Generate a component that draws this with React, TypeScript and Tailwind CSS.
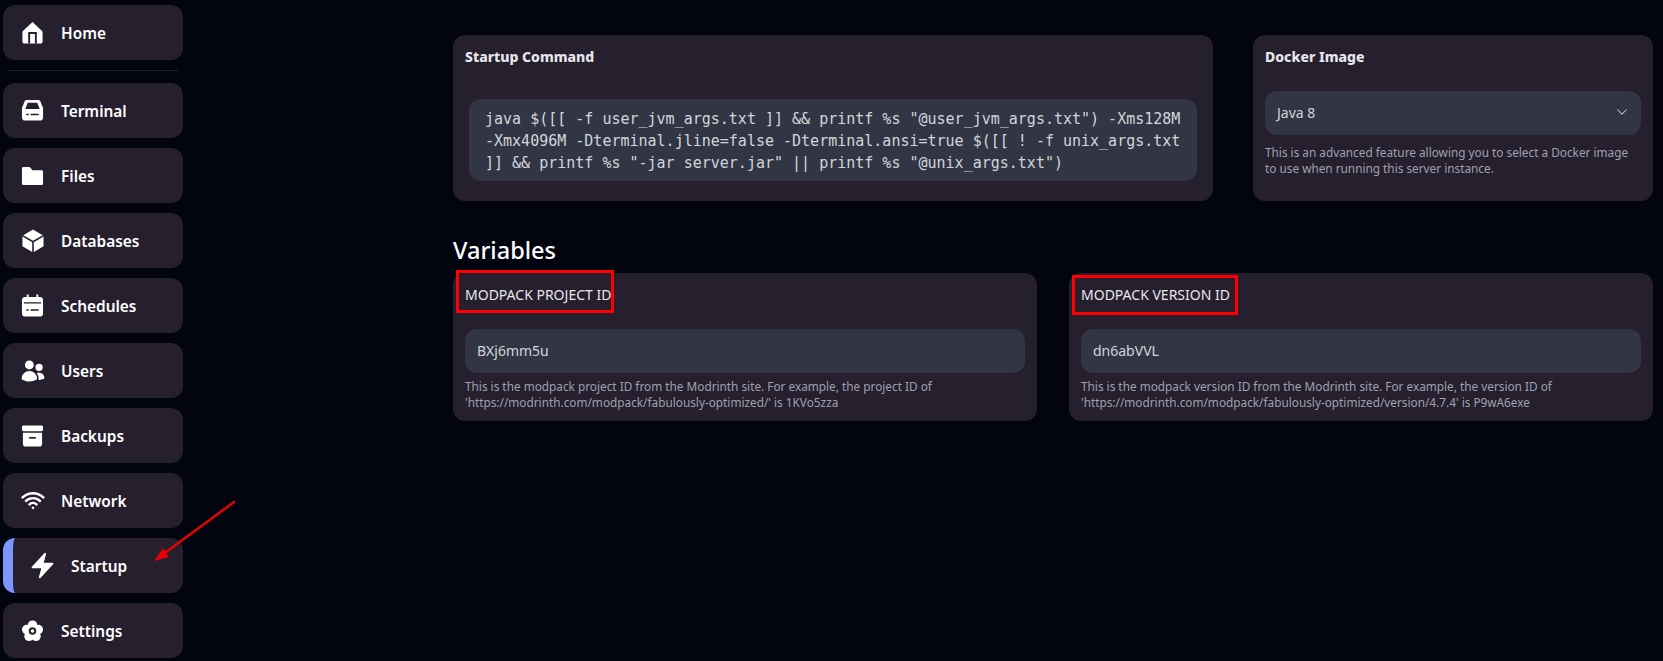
import React from "react";
import { HiCube, HiUsers, HiWifi, HiBolt, HiChevronDown } from "react-icons/hi2";

const sans = "font-['Noto_Sans',sans-serif]";

const HomeIcon = () => (
  <svg viewBox="0 0 24 24" className="w-[23px] h-[23px]">
    <path
      d="M12 1 L22 10.5 Q22.5 11 22.5 12 V22 Q22.5 23.5 21 23.5 H3 Q1.5 23.5 1.5 22 V12 Q1.5 11 2 10.5 Z"
      fill="white"
    />
    <path d="M8.5 23.5 V12.5 H15.5 V23.5" fill="none" stroke="#261f2e" strokeWidth="2" />
  </svg>
);

const TerminalIcon = () => (
  <svg viewBox="0 0 24 24" className="w-[23px] h-[23px]">
    <path
      fillRule="evenodd"
      d="M6 1 H18 Q19.5 1 20.3 2.5 L23 9.5 V19 Q23 22.5 19.5 22.5 H4.5 Q1 22.5 1 19 V9.5 L3.7 2.5 Q4.5 1 6 1 Z M7 3.8 H17 L19.5 10.5 H4.5 Z"
      fill="white"
    />
    <path d="M5.5 15.5 H8 V17 H5.5 Z M10 15.5 H18.5 V17 H10 Z" fill="#261f2e" />
  </svg>
);

const FolderIcon = () => (
  <svg viewBox="0 0 24 24" className="w-[24px] h-[24px]">
    <path
      d="M1 4 Q1 2.5 2.5 2.5 H9 L12 6 H21.5 Q23 6 23 7.5 V20 Q23 21.5 21.5 21.5 H2.5 Q1 21.5 1 20 Z"
      fill="white"
    />
  </svg>
);

const CalendarIcon = () => (
  <svg viewBox="0 0 24 24" className="w-[23px] h-[23px]">
    <path
      d="M6 0.5 H8 V3 H16 V0.5 H18 V3 H19.5 Q23 3 23 6.5 V20 Q23 23.5 19.5 23.5 H4.5 Q1 23.5 1 20 V6.5 Q1 3 4.5 3 H6 Z"
      fill="white"
    />
    <path d="M3 8.5 H21 V10 H3 Z M5.5 16 H8 V17.5 H5.5 Z M10 16 H18.5 V17.5 H10 Z" fill="#261f2e" />
  </svg>
);

const ArchiveIcon = () => (
  <svg viewBox="0 0 24 24" className="w-[24px] h-[24px]">
    <rect x="1" y="1" width="22" height="6" rx="1.5" fill="white" />
    <path d="M2 8.5 H22 V20 Q22 23 19 23 H5 Q2 23 2 20 Z" fill="white" />
    <path d="M8.5 13 H15.5 V14.8 H8.5 Z" fill="#261f2e" />
  </svg>
);

const SettingsIcon = () => (
  <svg viewBox="0 0 24 24" className="w-[24px] h-[24px]">
    <circle cx="12" cy="6" r="5" fill="white" />
    <circle cx="18" cy="10.5" r="5" fill="white" />
    <circle cx="15.6" cy="17.5" r="5" fill="white" />
    <circle cx="8.4" cy="17.5" r="5" fill="white" />
    <circle cx="6" cy="10.5" r="5" fill="white" />
    <circle cx="12" cy="12" r="6" fill="white" />
    <circle cx="12" cy="12" r="2.9" fill="white" stroke="#261f2e" strokeWidth="2" />
  </svg>
);

const navItems: { label: string; icon: React.ReactNode; active?: boolean }[] = [
  { label: "Terminal", icon: <TerminalIcon /> },
  { label: "Files", icon: <FolderIcon /> },
  { label: "Databases", icon: <HiCube className="w-[26px] h-[26px] shrink-0 text-white" /> },
  { label: "Schedules", icon: <CalendarIcon /> },
  { label: "Users", icon: <HiUsers className="w-[26px] h-[26px] shrink-0 text-white" /> },
  { label: "Backups", icon: <ArchiveIcon /> },
  { label: "Network", icon: <HiWifi className="w-[26px] h-[26px] shrink-0 text-white" /> },
  { label: "Startup", icon: <HiBolt className="w-[29px] h-[29px] shrink-0 text-white" />, active: true },
  { label: "Settings", icon: <SettingsIcon /> },
];

const NavItem: React.FC<{ label: string; icon: React.ReactNode; active?: boolean }> = ({ label, icon, active }) => {
  return (
    <div
      className={
        active
          ? "h-[55px] flex items-center rounded-xl bg-[#261f2e] overflow-hidden border-l-[10px] border-[#7b96ff] pl-[18px] gap-[17px]"
          : "h-[55px] flex items-center rounded-xl bg-[#261f2e] pl-[18px] gap-[17px]"
      }
    >
      <div className="w-[23px] h-[23px] flex items-center justify-center shrink-0">{icon}</div>
      <span className="pt-[2px] text-[15.4px] font-semibold text-white">{label}</span>
    </div>
  );
};

const VariableCard: React.FC<{ title: string; value: string; lines: string[] }> = ({ title, value, lines }) => {
  return (
    <div className="h-[148px] rounded-xl bg-[#261f2e] px-3 pt-[12px]">
      <div className="text-[14px] leading-[20px] text-[#e5e7eb]">{title}</div>
      <div className="mt-[24px] h-[44px] rounded-xl bg-[#323644] px-3 pb-[2px] flex items-center text-[14px] text-[#d1d5db]">
        {value}
      </div>
      <div className="mt-[5px] text-[11.8px] leading-[16px] text-[#9ca3af]">
        {lines.map((l) => (
          <div key={l}>{l}</div>
        ))}
      </div>
    </div>
  );
};

export default function App() {
  return (
    <div className={`relative h-[661px] w-full overflow-hidden bg-[#02050f] flex ${sans}`}>
      {/* Sidebar */}
      <nav className="w-[180px] ml-[3px] pt-[5px] flex flex-col shrink-0">
        <NavItem label="Home" icon={<HomeIcon />} />
        <div className="mx-[5px] mt-[10px] mb-[12px] h-px bg-[#261f2e]" />
        <div className="flex flex-col gap-[10px]">
          {navItems.map((item) => (
            <NavItem key={item.label} {...item} />
          ))}
        </div>
      </nav>

      {/* Main */}
      <main className="w-[1200px] ml-[270px] pt-[35px]">
        <div className="flex gap-[40px]">
          <div className="w-[760px] h-[166px] rounded-xl bg-[#261f2e] px-3 pt-[14px]">
            <h3 className="text-[14px] leading-[16px] font-extrabold text-[#e5e7eb]">Startup Command</h3>
            <div className="mt-[34px] ml-1 mr-1 h-[82px] rounded-xl bg-[#323644] px-[16px] py-[9px] font-['DejaVu_Sans_Mono',monospace] text-[15px] leading-[22px] text-[#d1d5db]">
              java $([[ -f user_jvm_args.txt ]] &amp;&amp; printf %s "@user_jvm_args.txt") -Xms128M -Xmx4096M
              -Dterminal.jline=false -Dterminal.ansi=true $([[ ! -f unix_args.txt ]] &amp;&amp; printf %s "-jar
              server.jar" || printf %s "@unix_args.txt")
            </div>
          </div>
          <div className="w-[400px] h-[166px] rounded-xl bg-[#261f2e] px-3 pt-[14px]">
            <h3 className="text-[14px] leading-[16px] font-extrabold text-[#e5e7eb]">Docker Image</h3>
            <div className="mt-[26px] h-[44px] rounded-xl bg-[#323644] px-3 pb-[2px] flex items-center justify-between text-[14px] text-[#d1d5db]">
              <span>Java 8</span>
              <HiChevronDown className="w-[14px] h-[14px]" />
            </div>
            <p className="mt-[9px] text-[11.8px] leading-[16px] text-[#9ca3af]">
              This is an advanced feature allowing you to select a Docker image to use when running this server instance.
            </p>
          </div>
        </div>

        <h2 className="mt-[29px] mb-[3px] text-[23.5px] leading-[40px] font-medium text-white">Variables</h2>

        <div className="grid grid-cols-2 gap-[32px]">
          <VariableCard
            title="MODPACK PROJECT ID"
            value="BXj6mm5u"
            lines={[
              "This is the modpack project ID from the Modrinth site. For example, the project ID of",
              "'https://modrinth.com/modpack/fabulously-optimized/' is 1KVo5zza",
            ]}
          />
          <VariableCard
            title="MODPACK VERSION ID"
            value="dn6abVVL"
            lines={[
              "This is the modpack version ID from the Modrinth site. For example, the version ID of",
              "'https://modrinth.com/modpack/fabulously-optimized/version/4.7.4' is P9wA6exe",
            ]}
          />
        </div>
      </main>

      {/* Annotations */}
      <div className="absolute left-[456px] top-[270px] w-[158px] h-[43px] border-[3px] border-[#ff0000]" />
      <div className="absolute left-[1072px] top-[275px] w-[166px] h-[40px] border-[3px] border-[#ff0000]" />
      <svg className="absolute left-[150px] top-[495px]" width="90" height="72" viewBox="150 495 90 72">
        <path d="M234 502 L162 555" stroke="#e60000" strokeWidth="2.5" strokeLinecap="round" />
        <path d="M154 561 L163 548 L169 557 Z" fill="#e60000" />
      </svg>
    </div>
  );
}
